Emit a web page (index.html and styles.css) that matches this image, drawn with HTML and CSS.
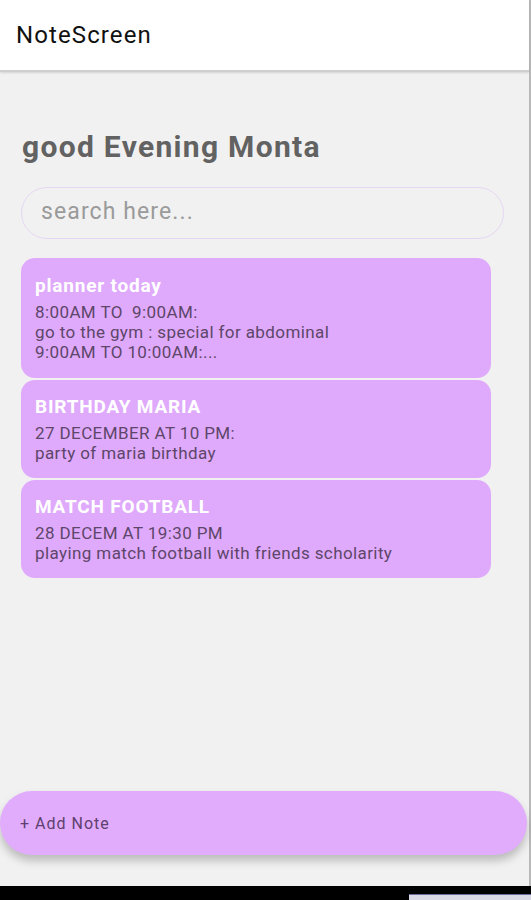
FILE: index.html
```html
<!DOCTYPE html>
<html lang="en">
<head>
    <meta charset="UTF-8">
    <meta name="viewport" content="width=device-width, initial-scale=1.0">
    <title>NoteScreen</title>
    <link rel="stylesheet" href="styles.css">
</head>
<body>
    <div class="screen">
        <header class="app-bar">NoteScreen</header>
        <main class="content">
            <h1 class="greeting">good Evening Monta</h1>
            <input class="search" type="text" placeholder="search here...">
            <section class="notes">
                <article class="note">
                    <h2 class="note-title">planner today</h2>
                    <p class="note-body">8:00AM TO &nbsp;9:00AM:<br>go to the gym : special for abdominal<br>9:00AM TO 10:00AM:...</p>
                </article>
                <article class="note">
                    <h2 class="note-title">BIRTHDAY MARIA</h2>
                    <p class="note-body">27 DECEMBER AT 10 PM:<br>party of maria birthday</p>
                </article>
                <article class="note">
                    <h2 class="note-title">MATCH FOOTBALL</h2>
                    <p class="note-body">28 DECEM AT 19:30 PM<br>playing match football with friends scholarity</p>
                </article>
            </section>
        </main>
        <button class="add-note">+ Add Note</button>
    </div>
    <footer class="nav-strip">
        <span class="nav-thumb"></span>
    </footer>
</body>
</html>
```

FILE: styles.css
```css
html, body {
    margin: 0;
    padding: 0;
}

body {
    width: 531px;
    height: 900px;
    background-color: black;
    font-family: Roboto, "Liberation Sans", sans-serif;
    overflow: hidden;
}

.screen {
    height: 886px;
    background-color: #f1f1f1;
    border-right: 2px solid #b9b9b9;
    display: flex;
    flex-direction: column;
    box-sizing: border-box;
}

.app-bar {
    height: 72px;
    box-sizing: border-box;
    background-color: white;
    border-bottom: 2px solid #cfcfcf;
    box-shadow: 0 1px 2px rgba(0, 0, 0, 0.12);
    padding: 21px 16px 0;
    font-size: 24px;
    letter-spacing: 1.1px;
    color: #111;
}

.content {
    padding: 0 0 0 21px;
    display: flex;
    flex-direction: column;
}

.greeting {
    margin: 55px 0 0 1px;
    font-size: 30px;
    line-height: 40px;
    letter-spacing: 1.3px;
    font-weight: bold;
    color: #626262;
}

.search {
    margin-top: 20px;
    width: 483px;
    height: 52px;
    box-sizing: border-box;
    border: 1px solid #e6d6f3;
    border-radius: 26px;
    background-color: transparent;
    padding: 0 19px 4px;
    font-family: Roboto, "Liberation Sans", sans-serif;
    font-size: 23px;
    letter-spacing: 1.1px;
    color: #555;
    outline: none;
}

.search::placeholder {
    color: #9a9a9a;
}

.notes {
    margin-top: 19px;
    width: 470px;
    display: flex;
    flex-direction: column;
    gap: 2px;
}

.note {
    background-color: #e0aafc;
    border-radius: 14px;
    padding: 15px 14px 15px;
}

.note:first-child {
    padding-top: 16px;
    padding-bottom: 16px;
}

.note-title {
    margin: 0;
    font-size: 19px;
    line-height: 24px;
    letter-spacing: 0.8px;
    font-weight: bold;
    color: white;
}

.note-body {
    margin: 4px 0 0;
    font-size: 17px;
    line-height: 20px;
    letter-spacing: 0.4px;
    color: #5d4669;
}

.add-note {
    margin-top: auto;
    margin-bottom: 31px;
    width: 527px;
    height: 64px;
    border: none;
    border-radius: 32px;
    background-color: #e1acfc;
    box-shadow: 0 6px 8px rgba(0, 0, 0, 0.22);
    text-align: left;
    padding: 0 20px;
    font-family: Roboto, "Liberation Sans", sans-serif;
    font-size: 16px;
    letter-spacing: 1px;
    color: #5e3f6e;
}

.nav-strip {
    height: 14px;
    display: flex;
    justify-content: flex-end;
    align-items: flex-end;
}

.nav-thumb {
    width: 122px;
    height: 5px;
    background-color: #d8d8e6;
    border-top: 1px solid #6a6a9a;
}
```
